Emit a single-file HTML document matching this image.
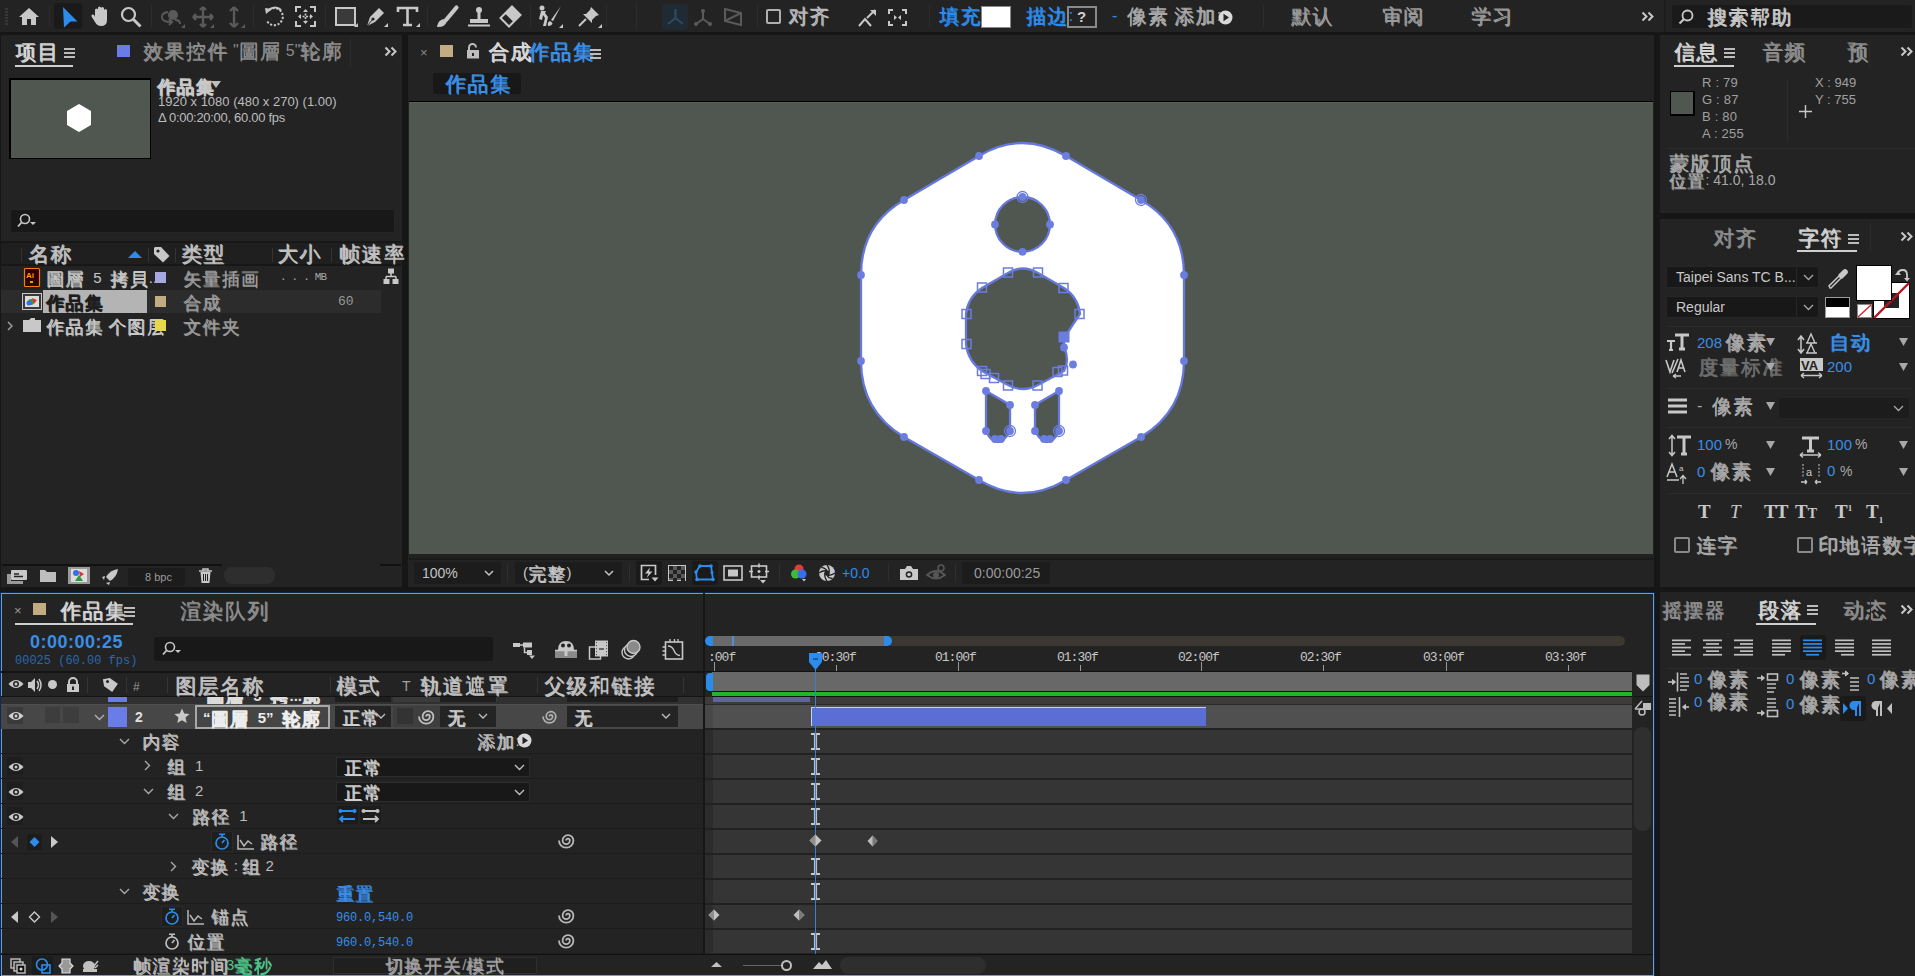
<!DOCTYPE html>
<html><head><meta charset="utf-8">
<style>
*{box-sizing:border-box;margin:0;padding:0}
html,body{width:1915px;height:976px;overflow:hidden;background:#161616;font-family:"Liberation Sans",sans-serif;color:#a9a9a9;font-size:14px}
.a{position:absolute}
.p{position:absolute;background:#232323}
.t{position:absolute;white-space:nowrap;line-height:1}
.c{letter-spacing:0;word-spacing:.3em}
.k{font-size:1.22em;line-height:0;letter-spacing:.07em;position:relative;top:.12em;text-shadow:.5px .5px 0 currentColor}
.b{color:#2d8ceb}
.m{font-family:"Liberation Mono",monospace}
svg{position:absolute;overflow:visible}
</style></head><body>
<!-- toolbar -->
<div class="p" id="toolbar" style="left:0;top:0;width:1915px;height:32px"></div>
<!-- project panel -->
<div class="p" id="proj" style="left:1px;top:35px;width:401px;height:552px"></div>
<!-- comp panel -->
<div class="p" id="comp" style="left:408px;top:35px;width:1246px;height:552px"></div>
<div class="a" style="left:409px;top:101px;width:1244px;height:1px;background:#000"></div><div class="a" style="left:409px;top:102px;width:1244px;height:452px;background:#4f5750;border-top:1px solid #5a5f5a"></div>

<!-- TOOLBAR -->
<svg style="left:5px;top:8px" width="3" height="18"><path d="M0,1H3M0,4H3M0,7H3M0,10H3M0,13H3M0,16H3" stroke="#4a4a4a" stroke-width="1"/></svg>
<svg style="left:18px;top:7px" width="22" height="19"><path d="M11,1 L21,10 H18 V18 H13 V12 H9 V18 H4 V10 H1 Z" fill="#c8c8c8"/></svg>
<div class="a" style="left:49px;top:5px;width:1px;height:22px;background:#2c2c2c"></div>
<div class="a" style="left:54px;top:3px;width:28px;height:26px;background:#1a1a1a;border-radius:2px"></div>
<svg style="left:62px;top:6px" width="17" height="22"><path d="M1,1 L15.5,15.5 L8.5,15.5 L2,21.5 Z" fill="#2d8ceb"/></svg>
<svg style="left:90px;top:6px" width="21" height="21"><path d="M5,11 V4 Q5,2.5 6.5,2.5 Q8,2.5 8,4 V10 V2 Q8,0.5 9.5,0.5 Q11,0.5 11,2 V10 V2.5 Q11,1 12.5,1 Q14,1 14,2.5 V10 V4.5 Q14,3 15.5,3 Q17,3 17,4.5 V14 Q17,20 11,20 Q7,20 5,16 L1.5,10.5 Q1,9 2.5,8.5 Q3.5,8.2 4.5,9.5 Z" fill="#c8c8c8"/></svg>
<svg style="left:120px;top:6px" width="22" height="22"><circle cx="8.5" cy="8.5" r="6.5" fill="none" stroke="#c8c8c8" stroke-width="2.2"/><path d="M13.5,13.5 L20.5,20.5" stroke="#c8c8c8" stroke-width="3"/></svg>
<div class="a" style="left:151px;top:5px;width:1px;height:22px;background:#2c2c2c"></div>
<svg style="left:160px;top:7px" width="24" height="20"><circle cx="13" cy="8" r="5" fill="#5a5a5a"/><path d="M8,5 Q1,6 2,11 Q3,15 11,15 M9,12 L12,15 L9,18" fill="none" stroke="#5a5a5a" stroke-width="2"/><path d="M15,13 Q20,13 20,17" fill="none" stroke="#5a5a5a" stroke-width="2"/></svg><svg style="left:181px;top:24px" width="4" height="4"><path d="M4,0V4H0Z" fill="#5a5a5a"/></svg>
<svg style="left:192px;top:6px" width="22" height="22"><path d="M11,1V21M1,11H21M11,1L8,4M11,1L14,4M11,21L8,18M11,21L14,18M1,11L4,8M1,11L4,14M21,11L18,8M21,11L18,14" stroke="#5a5a5a" stroke-width="2.4" fill="none"/></svg><svg style="left:210px;top:24px" width="4" height="4"><path d="M4,0V4H0Z" fill="#5a5a5a"/></svg>
<svg style="left:227px;top:6px" width="14" height="22"><path d="M7,1V21M7,1L3,5M7,1L11,5M7,21L3,17M7,21L11,17" stroke="#5a5a5a" stroke-width="2.4" fill="none"/></svg><svg style="left:241px;top:24px" width="4" height="4"><path d="M4,0V4H0Z" fill="#5a5a5a"/></svg>
<div class="a" style="left:253px;top:5px;width:1px;height:22px;background:#2c2c2c"></div>
<svg style="left:263px;top:6px" width="22" height="22"><path d="M6,4 A8.5,8.5 0 1 1 4,15" fill="none" stroke="#c8c8c8" stroke-width="2" stroke-dasharray="2.2,1.6"/><path d="M2,2 L9,3 L3,8Z" fill="#c8c8c8"/><path d="M6,4 A8.5,8.5 0 0 1 18,4" fill="none" stroke="#c8c8c8" stroke-width="2.2"/></svg>
<svg style="left:295px;top:6px" width="21" height="21"><path d="M1,6V1H6M15,1H20V6M20,15V20H15M6,20H1V15" fill="none" stroke="#c8c8c8" stroke-width="2"/><path d="M4,10.5H17M10.5,4V17" stroke="#c8c8c8" stroke-width="1.6" stroke-dasharray="2,1.5"/><path d="M3,10.5L6,8V13Z M18,10.5L15,8V13Z M10.5,3L8,6H13Z M10.5,18L8,15H13Z" fill="#c8c8c8"/></svg>
<div class="a" style="left:325px;top:5px;width:1px;height:22px;background:#2c2c2c"></div>
<svg style="left:335px;top:7px" width="21" height="19"><rect x="1" y="1" width="19" height="17" fill="#3a3a3a" stroke="#c8c8c8" stroke-width="2"/></svg><svg style="left:354px;top:23px" width="4" height="4"><path d="M4,0V4H0Z" fill="#c8c8c8"/></svg>
<svg style="left:365px;top:6px" width="21" height="21"><path d="M2,20 L5,11 L14,2 L19,7 L10,16 Z" fill="#c8c8c8"/><circle cx="8" cy="13" r="1.6" fill="#232323"/><path d="M2,20 L8,13" stroke="#232323" stroke-width="1"/></svg><svg style="left:384px;top:23px" width="4" height="4"><path d="M4,0V4H0Z" fill="#c8c8c8"/></svg>
<svg style="left:397px;top:7px" width="21" height="19"><path d="M1,5V1H20V5M10.5,1V18M6,18H15" fill="none" stroke="#c8c8c8" stroke-width="2.6"/></svg><svg style="left:416px;top:23px" width="4" height="4"><path d="M4,0V4H0Z" fill="#c8c8c8"/></svg>
<div class="a" style="left:427px;top:5px;width:1px;height:22px;background:#2c2c2c"></div>
<svg style="left:436px;top:6px" width="22" height="22"><path d="M20.5,1.5 L10,14" stroke="#c8c8c8" stroke-width="4.2" stroke-linecap="round"/><path d="M7.5,13 Q2,14 1,21 Q9,21.5 10.5,16 Z" fill="#c8c8c8"/></svg>
<svg style="left:467px;top:6px" width="24" height="21"><circle cx="12" cy="4" r="3" fill="#c8c8c8"/><rect x="10.5" y="5" width="3" height="8" fill="#c8c8c8"/><path d="M3,13H21V17H3Z" fill="#c8c8c8"/><rect x="1" y="18.5" width="22" height="2" fill="#c8c8c8"/></svg>
<svg style="left:498px;top:5px" width="24" height="23"><path d="M14,1.5 L22.5,10 L11,21.5 L2.5,13 Z" fill="none" stroke="#c8c8c8" stroke-width="2"/><path d="M14,1.5 L22.5,10 L15.5,17 L7,8.5 Z" fill="#c8c8c8"/></svg>
<div class="a" style="left:530px;top:5px;width:1px;height:22px;background:#2c2c2c"></div>
<svg style="left:537px;top:5px" width="26" height="23"><circle cx="5" cy="3" r="2.5" fill="#c8c8c8"/><path d="M4,6 L2,14 L5,15 L6,10 L8,13 L6,21 L9,21 L11,12 L8,8 L9,6Z" fill="#c8c8c8"/><path d="M24,1 L14,15 L16,16 Z" fill="#c8c8c8"/><path d="M13,16 Q10,17 11,21 Q15,21 15.5,18Z" fill="#c8c8c8"/></svg><svg style="left:559px;top:24px" width="4" height="4"><path d="M4,0V4H0Z" fill="#c8c8c8"/></svg>
<svg style="left:578px;top:6px" width="22" height="21"><path d="M13,1 L21,9 L18,10 L14,14 L14,17 L5,8 L8,8 L12,4 Z" fill="#c8c8c8"/><path d="M8,13 L1,20" stroke="#c8c8c8" stroke-width="2"/></svg><svg style="left:598px;top:24px" width="4" height="4"><path d="M4,0V4H0Z" fill="#c8c8c8"/></svg>
<div class="a" style="left:606px;top:5px;width:1px;height:22px;background:#2c2c2c"></div>
<div class="a" style="left:636px;top:3px;width:1px;height:26px;background:#2c2c2c"></div>
<div class="a" style="left:662px;top:4px;width:26px;height:26px;background:#1f2a33;border-radius:2px"></div>
<svg style="left:666px;top:7px" width="19" height="19"><path d="M9.5,2V11L2,17M9.5,11L17,17" stroke="#2a4a66" stroke-width="2.2" fill="none"/></svg>
<svg style="left:693px;top:7px" width="20" height="20"><path d="M10,3V12L3,17M10,12L17,17" stroke="#5a5a5a" stroke-width="2" fill="none"/><circle cx="10" cy="4" r="2" fill="#5a5a5a"/><circle cx="3" cy="17" r="2" fill="#5a5a5a"/><circle cx="17" cy="17" r="2" fill="#5a5a5a"/></svg>
<svg style="left:723px;top:7px" width="20" height="20"><path d="M2,2L18,6V18L2,14Z" fill="none" stroke="#5a5a5a" stroke-width="2"/><path d="M2,14L18,6" stroke="#5a5a5a" stroke-width="2"/></svg>
<div class="a" style="left:757px;top:5px;width:1px;height:22px;background:#2c2c2c"></div>
<div class="a" style="left:766px;top:9px;width:15px;height:15px;border:2px solid #b0b0b0;border-radius:2px"></div>
<div class="t c" style="left:788px;top:8px;font-size:16px;color:#b8b8b8;"><span class="k">对齐</span></div>
<svg style="left:858px;top:9px" width="19" height="18"><path d="M1,17 L7,10 L13,17" fill="none" stroke="#c8c8c8" stroke-width="2"/><path d="M9,9 L17,1" stroke="#c8c8c8" stroke-width="2"/><path d="M12,1H18V7Z" fill="#c8c8c8"/></svg>
<svg style="left:888px;top:9px" width="19" height="17"><path d="M1,5V1H5M14,1H18V5M18,12V16H14M5,16H1V12" fill="none" stroke="#c8c8c8" stroke-width="2"/><path d="M6,6L9,8.5L6,11Z M13,6L10,8.5L13,11Z" fill="#c8c8c8"/></svg>
<div class="a" style="left:929px;top:5px;width:1px;height:22px;background:#2c2c2c"></div>
<div class="t c" style="left:939px;top:8px;font-size:16px;color:#2d8ceb;letter-spacing:0"><span class="k">填充</span>:</div>
<div class="a" style="left:981px;top:6px;width:30px;height:22px;background:#fff;border:1px solid #888"></div>
<div class="t c" style="left:1026px;top:8px;font-size:16px;color:#2d8ceb;letter-spacing:0"><span class="k">描边</span>:</div>
<div class="a" style="left:1067px;top:6px;width:30px;height:22px;border:2px solid #8a8a8a"></div>
<div class="t " style="left:1077px;top:9px;font-size:15px;color:#d0d0d0;font-weight:bold">?</div>
<div class="t c" style="left:1112px;top:8px;font-size:16px;color:#a8a8a8;letter-spacing:0"><span style="color:#2d8ceb">-</span> <span class="k">像素</span></div>
<div class="t c" style="left:1174px;top:8px;font-size:16px;color:#a8a8a8;letter-spacing:0"><span class="k">添加</span>:</div>
<svg style="left:1218px;top:10px" width="15" height="15"><circle cx="7.5" cy="7.5" r="7" fill="#d8d8d8"/><path d="M5.5,3.8L11,7.5L5.5,11.2Z" fill="#232323"/></svg>
<div class="a" style="left:1263px;top:4px;width:1px;height:24px;background:#2c2c2c"></div>
<div class="t c" style="left:1291px;top:8px;font-size:16px;color:#9a9a9a;"><span class="k">默认</span></div>
<div class="t c" style="left:1382px;top:8px;font-size:16px;color:#9a9a9a;"><span class="k">审阅</span></div>
<div class="t c" style="left:1471px;top:8px;font-size:16px;color:#9a9a9a;"><span class="k">学习</span></div>
<svg style="left:1641px;top:11px" width="13" height="11"><path d="M1.5,1.5L5.5,5.5L1.5,9.5M7.5,1.5L11.5,5.5L7.5,9.5" fill="none" stroke="#c8c8c8" stroke-width="2"/></svg>
<div class="a" style="left:1664px;top:0px;width:2px;height:32px;background:#1c1c1c"></div>
<div class="a" style="left:1672px;top:5px;width:240px;height:23px;background:#1a1a1a;border-radius:3px"></div>
<svg style="left:1678px;top:9px" width="16" height="16"><circle cx="9.5" cy="6.5" r="5" fill="none" stroke="#c8c8c8" stroke-width="1.8"/><path d="M6,10 L1.5,14.5" stroke="#c8c8c8" stroke-width="2.2"/></svg>
<div class="t c" style="left:1707px;top:9px;font-size:16px;color:#c8c8c8;"><span class="k">搜索帮助</span></div>
<!-- PROJECT -->
<div class="t c" style="left:15px;top:43px;font-size:17px;color:#d4d4d4;"><span class="k">项目</span></div>
<svg style="left:64px;top:48px" width="11" height="10"><path d="M0,1H11M0,5H11M0,9H11" stroke="#bcbcbc" stroke-width="2"/></svg>
<div class="a" style="left:15px;top:65px;width:58px;height:2px;background:#cfcfcf"></div>
<div class="a" style="left:117px;top:45px;width:13px;height:12px;background:#6a7ce8"></div>
<div class="t c" style="left:143px;top:43px;font-size:16px;color:#8c8c8c;letter-spacing:0;word-spacing:0"><span class="k">效果控件</span> "<span class="k">圖層</span> 5"<span class="k">轮廓</span></div>
<div class="a" style="left:350px;top:38px;width:1px;height:30px;background:#2a2a2a"></div>
<svg style="left:384px;top:46px" width="13" height="11"><path d="M1.5,1.5L5.5,5.5L1.5,9.5M7.5,1.5L11.5,5.5L7.5,9.5" fill="none" stroke="#c8c8c8" stroke-width="2"/></svg>
<div class="a" style="left:9px;top:78px;width:142px;height:81px;background:#000"></div><div class="a" style="left:11px;top:80px;width:139px;height:78px;background:#4f5750"></div>
<svg style="left:66px;top:104px" width="26" height="28"><path d="M13,1 L24,7.5 V20.5 L13,27 L2,20.5 V7.5Z" fill="#fff" stroke="#fff" stroke-width="2" stroke-linejoin="round"/></svg>
<div class="t c" style="left:157px;top:78px;font-size:15px;color:#c8c8c8;font-weight:bold"><span class="k">作品集</span></div>
<svg style="left:211px;top:81px" width="10" height="7"><path d="M0,0H10L5,7Z" fill="#bdbdbd"/></svg>
<div class="t " style="left:158px;top:95px;font-size:13px;color:#bdbdbd;letter-spacing:0">1920 x 1080  (480 x 270) (1.00)</div>
<div class="t " style="left:158px;top:111px;font-size:13px;color:#bdbdbd;letter-spacing:-0.3px">&#916; 0:00:20:00, 60.00 fps</div>
<div class="a" style="left:10px;top:209px;width:385px;height:24px;background:#181818;border-radius:2px;border:1px solid #262626"></div>
<svg style="left:17px;top:213px" width="22" height="16"><circle cx="8" cy="6" r="4.5" fill="none" stroke="#c8c8c8" stroke-width="1.6"/><path d="M4.5,9.5 L1,13.5" stroke="#c8c8c8" stroke-width="1.8"/><path d="M13,9 L19,9 L16,12Z" fill="#c8c8c8"/></svg>
<div class="a" style="left:1px;top:241px;width:400px;height:2px;background:#171717"></div>
<div class="a" style="left:1px;top:243px;width:400px;height:22px;background:#1f1f1f"></div>
<div class="a" style="left:1px;top:264px;width:400px;height:2px;background:#171717"></div>
<div class="a" style="left:21px;top:248px;width:1px;height:14px;background:#333"></div>
<div class="a" style="left:148px;top:248px;width:1px;height:14px;background:#333"></div>
<div class="a" style="left:175px;top:248px;width:1px;height:14px;background:#333"></div>
<div class="a" style="left:272px;top:248px;width:1px;height:14px;background:#333"></div>
<div class="a" style="left:331px;top:248px;width:1px;height:14px;background:#333"></div>
<div class="a" style="left:393px;top:248px;width:1px;height:14px;background:#333"></div>
<div class="t c" style="left:28px;top:245px;font-size:17px;color:#c0c0c0;"><span class="k">名称</span></div>
<svg style="left:128px;top:251px" width="14" height="7"><path d="M0,7L7,0L14,7Z" fill="#2d8ceb"/></svg>
<svg style="left:153px;top:246px" width="18" height="17"><path d="M1,2V8L10,16.5L16.5,10L8,1H2Z" fill="#c8c8c8"/><circle cx="5" cy="5" r="1.6" fill="#1f1f1f"/></svg>
<div class="t c" style="left:181px;top:245px;font-size:17px;color:#c0c0c0;"><span class="k">类型</span></div>
<div class="t c" style="left:277px;top:245px;font-size:17px;color:#c0c0c0;"><span class="k">大小</span></div>
<div class="t c" style="left:339px;top:245px;font-size:17px;color:#c0c0c0;"><span class="k">帧速率</span></div>
<div class="a" style="left:1px;top:290px;width:380px;height:23px;background:#2c2c2c"></div>
<div class="a" style="left:43px;top:290px;width:104px;height:23px;background:#b4b4b4"></div>
<svg style="left:24px;top:268px" width="16" height="19"><rect x="0.5" y="0.5" width="15" height="18" rx="1" fill="#330000" stroke="#e8801f" stroke-width="1.2"/><text x="2" y="10" font-size="8" font-weight="bold" fill="#ff9a00" font-family="Liberation Sans">Ai</text><rect x="6" y="13" width="3" height="2" fill="#ff9a00"/></svg>
<div class="t c" style="left:46px;top:270px;font-size:15px;color:#c8c8c8;letter-spacing:0"><span class="k">圖層</span> 5 <span class="k">拷貝</span>...</div>
<div class="a" style="left:155px;top:272px;width:11px;height:11px;background:#a8a8e0"></div>
<div class="t c" style="left:183px;top:270px;font-size:15px;color:#9a9a9a;"><span class="k">矢量插画</span></div>
<div class="t m" style="left:280px;top:272px;font-size:11px;color:#a8a8a8;letter-spacing:-0.8px">. . .  MB</div>
<svg style="left:383px;top:268px" width="16" height="17"><rect x="5" y="0.5" width="6" height="5" fill="#c8c8c8"/><path d="M8,5V8.5M3,8.5H13M3,8.5V11M13,8.5V11" stroke="#c8c8c8" stroke-width="1.5" fill="none"/><rect x="0.5" y="11" width="6" height="5" fill="#c8c8c8"/><rect x="9.5" y="11" width="6" height="5" fill="#c8c8c8"/></svg>
<svg style="left:22px;top:293px" width="20" height="17"><rect x="0.5" y="0.5" width="19" height="16" fill="#3a3a3a" stroke="#c8c8c8"/><rect x="3" y="3" width="14" height="11" fill="#ddd"/><circle cx="9" cy="9" r="3" fill="#2a9a3a"/><path d="M10,5L15,7L12,11Z" fill="#d33"/><circle cx="7" cy="10" r="2.5" fill="#3a6de8"/></svg>
<div class="t c" style="left:46px;top:294px;font-size:15px;color:#1e1e1e;font-weight:bold"><span class="k">作品集</span></div>
<div class="a" style="left:155px;top:296px;width:11px;height:11px;background:#c3ab82"></div>
<div class="t c" style="left:183px;top:294px;font-size:15px;color:#9a9a9a;"><span class="k">合成</span></div>
<div class="t m" style="left:338px;top:295px;font-size:13px;color:#9a9a9a;">60</div>
<svg style="left:7px;top:321px" width="6" height="10"><path d="M1,1L5,5L1,9" fill="none" stroke="#a8a8a8" stroke-width="1.3"/></svg>
<svg style="left:22px;top:317px" width="20" height="16"><path d="M1,3H7L9,1H13V3H19V15H1Z" fill="#c8c8c8"/></svg>
<div class="t c" style="left:46px;top:318px;font-size:15px;color:#c8c8c8;letter-spacing:0;word-spacing:0"><span class="k">作品集</span> <span class="k">个图层</span></div>
<div class="a" style="left:155px;top:320px;width:11px;height:11px;background:#e6d84a"></div>
<div class="t c" style="left:183px;top:318px;font-size:15px;color:#9a9a9a;"><span class="k">文件夹</span></div>
<svg style="left:6px;top:569px" width="22" height="16"><rect x="5" y="1" width="16" height="10" rx="1" fill="#c8c8c8"/><path d="M8,5H13M8,7.5H17" stroke="#232323" stroke-width="1.3"/><rect x="1" y="5" width="4" height="10" fill="#9a9a9a"/><rect x="1" y="12" width="16" height="3" fill="#9a9a9a"/></svg>
<svg style="left:39px;top:569px" width="18" height="14"><path d="M1,1H6L8,3H17V13H1Z" fill="#bdbdbd"/></svg>
<svg style="left:68px;top:567px" width="22" height="17"><rect x="0" y="0" width="22" height="17" fill="#9a9a9a"/><rect x="3" y="2" width="16" height="13" fill="#ddd"/><circle cx="8" cy="6" r="3" fill="#3a6de8"/><path d="M11,4L16,7L12,10Z" fill="#d33"/><path d="M7,14L11,8L15,14Z" fill="#2a9a3a"/></svg>
<svg style="left:101px;top:568px" width="18" height="17"><path d="M17,1 Q9,2 5,9 L9,13 Q16,9 17,1Z" fill="#c8c8c8"/><path d="M4,8 L1,9 L3,12Z M9,14 L8,17 L5,15Z" fill="#c8c8c8"/></svg>
<div class="a" style="left:128px;top:568px;width:57px;height:18px;background:#1c1c1c;border-radius:2px"></div>
<div class="t " style="left:145px;top:572px;font-size:11px;color:#9a9a9a;">8 bpc</div>
<svg style="left:198px;top:568px" width="15" height="16"><path d="M1,3H14M5,3V1H10V3" stroke="#c8c8c8" stroke-width="1.5" fill="none"/><path d="M2.5,4H12.5L11.5,15H3.5Z" fill="#c8c8c8"/><path d="M5.5,6V13M7.5,6V13M9.5,6V13" stroke="#232323" stroke-width="1"/></svg>
<div class="a" style="left:224px;top:567px;width:51px;height:17px;background:#2e2e2e;border-radius:8px"></div>
<div class="a" style="left:2px;top:564px;width:220px;height:2px;background:#111"></div><div class="a" style="left:380px;top:564px;width:21px;height:2px;background:#111"></div>
<!-- comp header -->
<div class="t" style="left:420px;top:46px;font-size:13px;color:#8a8a8a">&#215;</div>
<div class="a" style="left:440px;top:45px;width:13px;height:12px;background:#c3ab82"></div>
<svg style="left:466px;top:43px" width="14" height="16" viewBox="0 0 14 16"><path d="M3,7 V4.5 A3.5,3.5 0 0 1 10,4.5" fill="none" stroke="#bdbdbd" stroke-width="2"/><rect x="1" y="7" width="12" height="8.5" fill="#bdbdbd"/><rect x="6" y="10" width="2" height="3" fill="#232323"/></svg>
<div class="t c" style="left:488px;top:43px;font-size:17px;color:#d9d9d9"><span class="k">合成</span></div>
<div class="t c" style="left:528px;top:43px;font-size:17px;color:#3b8fe4"><span class="k">作品集</span></div>
<svg style="left:590px;top:49px" width="11" height="10"><path d="M0,1H11M0,5H11M0,9H11" stroke="#bcbcbc" stroke-width="2"/></svg>
<div class="a" style="left:433px;top:73px;width:88px;height:21px;background:#181818;border-radius:2px"></div>
<div class="t c" style="left:445px;top:75px;font-size:17px;color:#3b8fe4"><span class="k">作品集</span></div>
<!-- comp bottom bar -->
<div class="a" style="left:409px;top:554px;width:1244px;height:4px;background:#20221f"></div><div class="a" style="left:409px;top:558px;width:1244px;height:2px;background:#1a1a1b"></div>
<div class="a" style="left:414px;top:562px;width:87px;height:22px;background:#1c1c1c;border-radius:2px"></div>
<div class="t" style="left:422px;top:566px;font-size:14px;color:#c4c4c4">100%</div>
<svg style="left:484px;top:570px" width="10" height="6"><path d="M1,1 L5,5 L9,1" fill="none" stroke="#c4c4c4" stroke-width="1.5"/></svg>
<div class="a" style="left:507px;top:564px;width:1px;height:18px;background:#2e2e2e"></div>
<div class="a" style="left:515px;top:562px;width:107px;height:22px;background:#1c1c1c;border-radius:2px"></div>
<div class="t c" style="left:523px;top:565px;font-size:15px;color:#c4c4c4">(<span class="k">完整</span>)</div>
<svg style="left:604px;top:570px" width="10" height="6"><path d="M1,1 L5,5 L9,1" fill="none" stroke="#c4c4c4" stroke-width="1.5"/></svg>
<div class="a" style="left:629px;top:564px;width:1px;height:18px;background:#2e2e2e"></div>
<div class="a" style="left:636px;top:561px;width:26px;height:24px;background:#1a1a1a;border-radius:2px"></div>
<svg style="left:640px;top:564px" width="20" height="20"><path d="M15.5,11 V1.5 H1.5 V15.5 H9" fill="none" stroke="#c8c8c8" stroke-width="1.7"/><path d="M10,3.5 L5,9.5 H8.5 L6.5,14 L12.5,7.5 H9 Z" fill="#c8c8c8"/><path d="M11.5,13.5 H18.5 L15,17.5Z" fill="#c8c8c8"/></svg>
<svg style="left:668px;top:565px" width="18" height="16"><rect x="0.5" y="0.5" width="17" height="15" fill="#5a5a5a" stroke="#c8c8c8"/><path d="M1,1h4v4h-4zM9,1h4v4h-4zM5,5h4v4h-4zM13,5h4v4h-4zM1,9h4v4h-4zM9,9h4v4h-4zM5,13h4v3h-4zM13,13h4v3h-4z" fill="#222"/></svg>
<div class="a" style="left:692px;top:561px;width:26px;height:24px;background:#1a1a1a;border-radius:2px"></div>
<svg style="left:694px;top:564px" width="22" height="19"><path d="M6,2 L17,2 L19,15.5 L3,15.5 L2,8 Z" fill="none" stroke="#2d8ceb" stroke-width="1.8"/><g fill="#2d8ceb"><circle cx="6" cy="2" r="1.8"/><circle cx="17" cy="2" r="1.8"/><circle cx="19" cy="15.5" r="1.8"/><circle cx="3" cy="15.5" r="1.8"/><circle cx="2" cy="8" r="1.8"/><circle cx="18" cy="8.5" r="1.5"/></g></svg>
<svg style="left:723px;top:565px" width="20" height="16"><rect x="1" y="1" width="18" height="14" fill="none" stroke="#c8c8c8" stroke-width="1.6"/><rect x="5" y="4.5" width="10" height="7" fill="#c8c8c8"/></svg>
<svg style="left:749px;top:563px" width="20" height="21"><rect x="2.5" y="3" width="15" height="11" fill="none" stroke="#c8c8c8" stroke-width="1.6"/><path d="M0,8.5H4M16,8.5H20M10,0.5V4.5M10,12.5V16.5M8.5,8.5H11.5M10,7V10" stroke="#c8c8c8" stroke-width="1.6"/><path d="M11,17 L17,17 L14,20.5Z" fill="#c8c8c8"/></svg>
<div class="a" style="left:779px;top:564px;width:1px;height:18px;background:#2e2e2e"></div>
<svg style="left:790px;top:564px" width="20" height="18"><circle cx="9" cy="5" r="4.5" fill="#e23b3b"/><circle cx="5.5" cy="10" r="4.5" fill="#3dbb3d"/><circle cx="12" cy="10" r="4.5" fill="#3a6de8"/><path d="M12,15 L16,15 L14,17.5Z" fill="#c8c8c8"/></svg>
<svg style="left:818px;top:564px" width="18" height="18"><circle cx="9" cy="9" r="8" fill="#c8c8c8"/><g stroke="#232323" stroke-width="1.3" fill="none"><path d="M9,1 Q12,5 11,9"/><path d="M17,9 Q13,12 9,11"/><path d="M9,17 Q6,13 7,9"/><path d="M1,9 Q5,6 9,7"/><path d="M3.3,3.3 Q8,4 9,7"/><path d="M14.7,14.7 Q10,14 9,11"/></g><circle cx="9" cy="9" r="2.6" fill="#232323"/></svg>
<div class="t" style="left:842px;top:566px;font-size:14px;color:#2d8ceb">+0.0</div>
<div class="a" style="left:888px;top:564px;width:1px;height:18px;background:#2e2e2e"></div>
<svg style="left:899px;top:565px" width="20" height="16"><path d="M1,4 H6 L8,1 H12 L14,4 H19 V15 H1 Z" fill="#c8c8c8"/><circle cx="10" cy="9.5" r="3.3" fill="#232323"/><circle cx="10" cy="9.5" r="1.8" fill="#c8c8c8"/></svg>
<svg style="left:926px;top:564px" width="20" height="18" opacity=".3"><path d="M1,11 Q10,3 19,11 Q10,18 1,11Z" fill="none" stroke="#c8c8c8" stroke-width="1.8"/><circle cx="10" cy="11" r="3" fill="#c8c8c8"/><circle cx="15" cy="4" r="3" fill="none" stroke="#c8c8c8" stroke-width="1.6"/></svg>
<div class="a" style="left:955px;top:564px;width:1px;height:18px;background:#2e2e2e"></div>
<div class="a" style="left:962px;top:562px;width:88px;height:22px;background:#1c1c1c;border-radius:2px"></div>
<div class="t" style="left:974px;top:566px;font-size:14px;color:#9a9a9a">0:00:00:25</div>
<!-- info -->
<div class="p" id="info" style="left:1660px;top:35px;width:255px;height:178px"></div>
<!-- character -->
<div class="p" id="char" style="left:1660px;top:219px;width:255px;height:368px"></div>
<!-- timeline -->
<div class="p" id="tl" style="left:1px;top:593px;width:1653px;height:383px;border:1px solid #6a9ed8;box-shadow:0 0 0 1px #0b2a52"></div>

<!-- TIMELINE -->
<div class="t" style="left:14px;top:604px;font-size:13px;color:#9a9a9a">&#215;</div>
<div class="a" style="left:33px;top:603px;width:13px;height:12px;background:#c3ab82"></div>
<div class="t c" style="left:60px;top:602px;font-size:17px;color:#d4d4d4"><span class="k">作品集</span></div>
<svg style="left:124px;top:607px" width="11" height="10"><path d="M0,1H11M0,5H11M0,9H11" stroke="#bcbcbc" stroke-width="2"/></svg>
<div class="a" style="left:15px;top:623px;width:118px;height:2px;background:#cfcfcf"></div>
<div class="t c" style="left:180px;top:602px;font-size:17px;color:#8c8c8c"><span class="k">渲染队列</span></div>
<div class="t" style="left:30px;top:633px;font-size:18px;font-weight:bold;color:#3a8ee6;letter-spacing:0.5px">0:00:00:25</div>
<div class="t" style="left:15px;top:655px;font-size:12px;font-family:'Liberation Mono',monospace;color:#2a67ad">00025 (60.00 fps)</div>
<div class="a" style="left:154px;top:637px;width:339px;height:24px;background:#181818;border-radius:3px"></div>
<svg style="left:162px;top:641px" width="22" height="16"><circle cx="8" cy="6" r="4.5" fill="none" stroke="#c8c8c8" stroke-width="1.6"/><path d="M4.5,9.5 L1,13.5" stroke="#c8c8c8" stroke-width="1.8"/><path d="M13,9 L19,9 L16,12Z" fill="#c8c8c8"/></svg>
<!-- timeline toolbar icons -->
<svg style="left:512px;top:640px" width="24" height="20"><rect x="1" y="3" width="7" height="4" fill="#c8c8c8"/><path d="M8,5H11" stroke="#c8c8c8" stroke-width="1.5"/><rect x="11" y="2.5" width="9" height="5" fill="#c8c8c8"/><path d="M12.5,7.5V12.5H15" fill="none" stroke="#c8c8c8" stroke-width="1.5"/><rect x="15" y="10" width="5" height="5" fill="#c8c8c8"/><path d="M17,15.5H23L20,19Z" fill="#c8c8c8"/></svg>
<svg style="left:554px;top:639px" width="24" height="20"><path d="M4,11 Q4,2 12,2 Q20,2 20,11Z" fill="#c8c8c8"/><circle cx="9" cy="6.5" r="2" fill="#232323"/><circle cx="15" cy="6.5" r="2" fill="#232323"/><rect x="1" y="12" width="22" height="7" fill="#8a8a8a"/><path d="M1,11.5H23" stroke="#c8c8c8" stroke-width="1.5"/><rect x="10.5" y="9" width="3" height="8" fill="#c8c8c8"/></svg>
<svg style="left:587px;top:639px" width="22" height="22"><rect x="2.5" y="8" width="11" height="12" fill="none" stroke="#c8c8c8" stroke-width="1.5"/><rect x="8" y="1.5" width="13" height="16" fill="#c8c8c8"/><path d="M9.5,3V16.5M19.5,3V16.5" stroke="#555" stroke-width="1" stroke-dasharray="1.2,1.8"/><path d="M12,10H17" stroke="#333" stroke-width="1.3"/></svg>
<svg style="left:620px;top:639px" width="22" height="22"><circle cx="8.5" cy="13.5" r="6.5" fill="#232323" stroke="#c8c8c8" stroke-width="1.4"/><circle cx="11" cy="11" r="6.5" fill="#232323" stroke="#c8c8c8" stroke-width="1.4"/><circle cx="13.5" cy="8" r="6.5" fill="#8a8a8a" stroke="#c8c8c8" stroke-width="1.4"/></svg>
<svg style="left:662px;top:638px" width="24" height="24"><rect x="3.5" y="4" width="17" height="17" fill="none" stroke="#c8c8c8" stroke-width="1.6"/><path d="M8,1V4M12.5,1V4M16,1V4M0.5,9H3.5M0.5,13H3.5M0.5,17H3.5" stroke="#c8c8c8" stroke-width="1.3"/><path d="M6,8 Q10,8 12,12.5 Q14,17.5 18,17.5" fill="none" stroke="#c8c8c8" stroke-width="1.4"/></svg>
<!-- column header -->
<div class="a" style="left:1px;top:671px;width:703px;height:2px;background:#141414"></div>
<div class="a" style="left:1px;top:696px;width:703px;height:1px;background:#141414"></div>
<svg style="left:8px;top:677px" width="16" height="14"><path d="M0.5,7 Q8,-1 15.5,7 Q8,15 0.5,7Z" fill="#c8c8c8"/><circle cx="8" cy="7" r="3" fill="#232323"/><circle cx="8" cy="7" r="1.5" fill="#c8c8c8"/></svg>
<svg style="left:27px;top:677px" width="16" height="16"><path d="M1,5H4L8,1V15L4,11H1Z" fill="#c8c8c8"/><path d="M10,4Q13,8 10,12M12,2Q16,8 12,14" fill="none" stroke="#c8c8c8" stroke-width="1.5"/></svg>
<div class="a" style="left:48px;top:680px;width:9px;height:9px;border-radius:50%;background:#c8c8c8"></div>
<svg style="left:66px;top:677px" width="14" height="16"><path d="M3,7V5A4,4 0 0 1 11,5V7" fill="none" stroke="#c8c8c8" stroke-width="2"/><rect x="1" y="7" width="12" height="8" fill="#c8c8c8"/><rect x="6" y="9.5" width="2" height="3.5" fill="#232323"/></svg>
<div class="a" style="left:87px;top:677px;width:1px;height:16px;background:#353535"></div>
<svg style="left:103px;top:677px" width="16" height="16"><path d="M1,1H8L15,8L8,15L1,8Z" fill="#c8c8c8" transform="rotate(-10 8 8)"/><circle cx="4.5" cy="4.5" r="1.5" fill="#232323"/></svg>
<div class="a" style="left:126px;top:677px;width:1px;height:16px;background:#353535"></div>
<div class="t" style="left:133px;top:681px;font-size:12px;color:#9a9a9a">#</div>
<div class="a" style="left:167px;top:677px;width:1px;height:16px;background:#353535"></div>
<div class="t c" style="left:175px;top:677px;font-size:17px;color:#c0c0c0"><span class="k">图层名称</span></div>
<div class="a" style="left:330px;top:677px;width:1px;height:16px;background:#353535"></div>
<div class="t c" style="left:336px;top:677px;font-size:17px;color:#c0c0c0"><span class="k">模式</span></div>
<div class="t" style="left:402px;top:679px;font-size:14px;color:#a0a0a0">T</div>
<div class="t c" style="left:420px;top:677px;font-size:17px;color:#c0c0c0"><span class="k">轨道遮罩</span></div>
<div class="a" style="left:537px;top:677px;width:1px;height:16px;background:#353535"></div>
<div class="t c" style="left:544px;top:677px;font-size:17px;color:#c0c0c0"><span class="k">父级和链接</span></div>
<div class="a" style="left:683px;top:677px;width:1px;height:16px;background:#353535"></div>
<!-- partial layer 1 row -->
<div class="a" style="left:1px;top:697px;width:702px;height:7px;background:#303030;overflow:hidden">
  <div class="a" style="left:107px;top:-12px;width:19px;height:17px;background:#6a7ce8"></div>
  <div class="a" style="left:334px;top:-5px;width:56px;height:10px;background:#1e1e1e"></div><div class="a" style="left:392px;top:-5px;width:104px;height:10px;background:#3a3a3a"></div><div class="a" style="left:439px;top:-5px;width:56px;height:10px;background:#1e1e1e"></div><div class="a" style="left:566px;top:-5px;width:111px;height:10px;background:#1e1e1e"></div><div class="t c" style="left:205px;top:-9px;font-size:15px;font-weight:bold;color:#ddd"><span class="k">圖層</span> 5 <span class="k">拷</span>...<span class="k">廓</span></div>
</div>
<!-- layer 2 row -->
<div class="a" style="left:1px;top:704px;width:702px;height:25px;background:#474747;border-top:1px solid #4e4e4e"></div>
<div class="a" style="left:7px;top:707px;width:16px;height:17px;background:#3a3a3a"></div>
<svg style="left:8px;top:709px" width="16" height="14"><path d="M0.5,7 Q8,-1 15.5,7 Q8,15 0.5,7Z" fill="#d0d0d0"/><circle cx="8" cy="7" r="3" fill="#3a3a3a"/><circle cx="8" cy="7" r="1.5" fill="#d0d0d0"/></svg>
<div class="a" style="left:45px;top:707px;width:15px;height:16px;background:#3d3d3d"></div>
<div class="a" style="left:63px;top:707px;width:16px;height:16px;background:#3d3d3d"></div>
<svg style="left:94px;top:714px" width="11" height="7"><path d="M1,1L5.5,5.5L10,1" fill="none" stroke="#b0b0b0" stroke-width="1.4"/></svg>
<div class="a" style="left:108px;top:707px;width:19px;height:20px;background:#6a7ce8"></div>
<div class="t" style="left:135px;top:710px;font-size:14px;font-weight:bold;color:#e0e0e0">2</div>
<svg style="left:174px;top:708px" width="16" height="16"><path d="M8,0.5L10.2,5.6L15.6,6.1L11.5,9.6L12.7,15L8,12.2L3.3,15L4.5,9.6L0.4,6.1L5.8,5.6Z" fill="#c8c8c8"/></svg>
<div class="a" style="left:195px;top:705px;width:135px;height:24px;border:2px solid #a8a8a8;background:#454545"></div>
<div class="t c" style="left:203px;top:710px;font-size:15px;font-weight:bold;color:#ededed">“<span class="k">圖層</span> 5” <span class="k">轮廓</span></div>
<div class="a" style="left:335px;top:706px;width:56px;height:21px;background:#242424"></div>
<div class="t c" style="left:342px;top:709px;font-size:15px;color:#d0d0d0"><span class="k">正常</span></div>
<svg style="left:376px;top:713px" width="10" height="6"><path d="M1,1L5,5L9,1" fill="none" stroke="#c0c0c0" stroke-width="1.3"/></svg>
<div class="a" style="left:393px;top:706px;width:103px;height:21px;background:#3e3e3e"></div>
<div class="a" style="left:397px;top:708px;width:16px;height:16px;background:#333"></div>
<svg style="left:419px;top:707px" width="18" height="18"><path d="M9,9.5 m-1.8,0 a1.8,1.8 0 1 1 3.6,0 a3.6,3.6 0 1 1 -7.2,0 a5.4,5.4 0 1 1 10.8,0 a7.2,7.2 0 1 1 -14.4,0" fill="none" stroke="#c0c0c0" stroke-width="1.8"/></svg>
<div class="a" style="left:440px;top:706px;width:56px;height:21px;background:#242424"></div>
<div class="t c" style="left:447px;top:709px;font-size:15px;color:#d0d0d0"><span class="k">无</span></div>
<svg style="left:478px;top:713px" width="10" height="6"><path d="M1,1L5,5L9,1" fill="none" stroke="#c0c0c0" stroke-width="1.3"/></svg>
<svg style="left:543px;top:708px" width="16" height="16"><path d="M8,8.5 m-1.6,0 a1.6,1.6 0 1 1 3.2,0 a3.2,3.2 0 1 1 -6.4,0 a4.8,4.8 0 1 1 9.6,0 a6.4,6.4 0 1 1 -12.8,0" fill="none" stroke="#b0b0b0" stroke-width="1.7"/></svg>
<div class="a" style="left:567px;top:706px;width:111px;height:21px;background:#242424"></div>
<div class="t c" style="left:574px;top:709px;font-size:15px;color:#d0d0d0"><span class="k">无</span></div>
<svg style="left:661px;top:713px" width="10" height="6"><path d="M1,1L5,5L9,1" fill="none" stroke="#c0c0c0" stroke-width="1.3"/></svg>
<div class="a" style="left:1px;top:753px;width:703px;height:1px;background:#1c1c1c"></div>
<div class="a" style="left:1px;top:778px;width:703px;height:1px;background:#1c1c1c"></div>
<div class="a" style="left:7px;top:757px;width:16px;height:18px;background:#1e1e1e"></div><svg style="left:8px;top:760px" width="16" height="14"><path d="M0.5,7 Q8,-1 15.5,7 Q8,15 0.5,7Z" fill="#c8c8c8"/><circle cx="8" cy="7" r="3" fill="#1e1e1e"/><circle cx="8" cy="7" r="1.5" fill="#c8c8c8"/></svg>
<div class="a" style="left:1px;top:803px;width:703px;height:1px;background:#1c1c1c"></div>
<div class="a" style="left:7px;top:782px;width:16px;height:18px;background:#1e1e1e"></div><svg style="left:8px;top:785px" width="16" height="14"><path d="M0.5,7 Q8,-1 15.5,7 Q8,15 0.5,7Z" fill="#c8c8c8"/><circle cx="8" cy="7" r="3" fill="#1e1e1e"/><circle cx="8" cy="7" r="1.5" fill="#c8c8c8"/></svg>
<div class="a" style="left:1px;top:828px;width:703px;height:1px;background:#1c1c1c"></div>
<div class="a" style="left:7px;top:807px;width:16px;height:18px;background:#1e1e1e"></div><svg style="left:8px;top:810px" width="16" height="14"><path d="M0.5,7 Q8,-1 15.5,7 Q8,15 0.5,7Z" fill="#c8c8c8"/><circle cx="8" cy="7" r="3" fill="#1e1e1e"/><circle cx="8" cy="7" r="1.5" fill="#c8c8c8"/></svg>
<div class="a" style="left:1px;top:853px;width:703px;height:1px;background:#1c1c1c"></div>
<div class="a" style="left:1px;top:878px;width:703px;height:1px;background:#1c1c1c"></div>
<div class="a" style="left:1px;top:903px;width:703px;height:1px;background:#1c1c1c"></div>
<div class="a" style="left:1px;top:928px;width:703px;height:1px;background:#1c1c1c"></div>
<div class="a" style="left:1px;top:953px;width:703px;height:1px;background:#1c1c1c"></div>
<svg style="left:119px;top:738px" width="11" height="7"><path d="M1,1L5.5,5.5L10,1" fill="none" stroke="#a8a8a8" stroke-width="1.4"/></svg>
<div class="t c" style="left:142px;top:733px;font-size:15px;color:#bdbdbd"><span class="k">内容</span></div>
<div class="t c" style="left:477px;top:733px;font-size:15px;color:#bdbdbd"><span class="k">添加</span>:</div>
<svg style="left:517px;top:733px" width="15" height="15"><circle cx="7.5" cy="7.5" r="7" fill="#d8d8d8"/><path d="M5.5,3.8L11,7.5L5.5,11.2Z" fill="#232323"/></svg>
<svg style="left:144px;top:760px" width="7" height="11"><path d="M1,1L5.5,5.5L1,10" fill="none" stroke="#a8a8a8" stroke-width="1.4"/></svg>
<div class="t c" style="left:167px;top:758px;font-size:15px;color:#bdbdbd"><span class="k">组</span> 1</div>
<div class="a" style="left:336px;top:757px;width:194px;height:20px;background:#181818;border:1px solid #2c2c2c"></div><div class="t c" style="left:344px;top:759px;font-size:15px;color:#cfcfcf"><span class="k">正常</span></div><svg style="left:514px;top:764px" width="11" height="7"><path d="M1,1L5.5,5.5L10,1" fill="none" stroke="#c0c0c0" stroke-width="1.4"/></svg>
<svg style="left:143px;top:788px" width="11" height="7"><path d="M1,1L5.5,5.5L10,1" fill="none" stroke="#a8a8a8" stroke-width="1.4"/></svg>
<div class="t c" style="left:167px;top:783px;font-size:15px;color:#bdbdbd"><span class="k">组</span> 2</div>
<div class="a" style="left:336px;top:782px;width:194px;height:20px;background:#181818;border:1px solid #2c2c2c"></div><div class="t c" style="left:344px;top:784px;font-size:15px;color:#cfcfcf"><span class="k">正常</span></div><svg style="left:514px;top:789px" width="11" height="7"><path d="M1,1L5.5,5.5L10,1" fill="none" stroke="#c0c0c0" stroke-width="1.4"/></svg>
<svg style="left:168px;top:813px" width="11" height="7"><path d="M1,1L5.5,5.5L10,1" fill="none" stroke="#a8a8a8" stroke-width="1.4"/></svg>
<div class="t c" style="left:192px;top:808px;font-size:15px;color:#bdbdbd"><span class="k">路径</span> 1</div>
<div class="a" style="left:337px;top:806px;width:21px;height:18px;background:#1c1c1c"></div><svg style="left:338px;top:808px" width="19" height="14"><path d="M2,3H17M2,11H17M5,8L2,11L5,14" fill="none" stroke="#2d8ceb" stroke-width="1.8"/><circle cx="2.5" cy="3" r="2" fill="#2d8ceb"/><circle cx="16.5" cy="3" r="2" fill="#2d8ceb"/></svg>
<div class="a" style="left:360px;top:806px;width:21px;height:18px;background:#1c1c1c"></div><svg style="left:361px;top:808px" width="19" height="14"><path d="M2,3H17M2,11H17M14,8L17,11L14,14" fill="none" stroke="#c0c0c0" stroke-width="1.8"/><circle cx="2.5" cy="3" r="2" fill="#c0c0c0"/><circle cx="16.5" cy="3" r="2" fill="#c0c0c0"/></svg>
<svg style="left:10px;top:834px" width="52" height="16"><path d="M1,8L8,2V14Z" fill="#555"/><rect x="17" y="0" width="15" height="16" fill="#1c1c1c"/><path d="M24.5,3L29.5,8L24.5,13L19.5,8Z" fill="#2d8ceb"/><path d="M41,2L48,8L41,14Z" fill="#c8c8c8"/></svg>
<div class="a" style="left:211px;top:831px;width:22px;height:21px;background:#1e1e1e;border:1px solid #2a2a2a"></div><svg style="left:214px;top:833px" width="16" height="17"><circle cx="8" cy="10" r="6" fill="none" stroke="#2d8ceb" stroke-width="1.7"/><path d="M5,1.2H11M8,1V4M8,10L10.5,7" stroke="#2d8ceb" stroke-width="1.6" fill="none"/></svg>
<svg style="left:237px;top:835px" width="17" height="15"><path d="M1,0V14H17M3,5L7,11L11,6L15,9" fill="none" stroke="#b8b8b8" stroke-width="1.5"/></svg>
<div class="t c" style="left:260px;top:833px;font-size:15px;color:#bdbdbd"><span class="k">路径</span></div>
<svg style="left:559px;top:831px" width="18" height="18"><path d="M9,9.5 m-1.8,0 a1.8,1.8 0 1 1 3.6,0 a3.6,3.6 0 1 1 -7.2,0 a5.4,5.4 0 1 1 10.8,0 a7.2,7.2 0 1 1 -14.4,0" fill="none" stroke="#b8b8b8" stroke-width="1.8"/></svg>
<svg style="left:170px;top:861px" width="7" height="11"><path d="M1,1L5.5,5.5L1,10" fill="none" stroke="#a8a8a8" stroke-width="1.4"/></svg>
<div class="t c" style="left:191px;top:858px;font-size:15px;word-spacing:0;color:#bdbdbd"><span class="k">变换</span> : <span class="k">组</span> 2</div>
<svg style="left:119px;top:888px" width="11" height="7"><path d="M1,1L5.5,5.5L10,1" fill="none" stroke="#a8a8a8" stroke-width="1.4"/></svg>
<div class="t c" style="left:142px;top:883px;font-size:15px;color:#bdbdbd"><span class="k">变换</span></div>
<div class="t c" style="left:336px;top:885px;font-size:15px;color:#3a8ee6"><span class="k">重置</span></div>
<svg style="left:10px;top:909px" width="52" height="16"><path d="M1,8L8,2V14Z" fill="#c8c8c8"/><path d="M24.5,3L29.5,8L24.5,13L19.5,8Z" fill="none" stroke="#c8c8c8" stroke-width="1.4"/><path d="M41,2L48,8L41,14Z" fill="#555"/></svg>
<div class="a" style="left:161px;top:906px;width:22px;height:21px;background:#1e1e1e;border:1px solid #2a2a2a"></div><svg style="left:164px;top:908px" width="16" height="17"><circle cx="8" cy="10" r="6" fill="none" stroke="#2d8ceb" stroke-width="1.7"/><path d="M5,1.2H11M8,1V4M8,10L10.5,7" stroke="#2d8ceb" stroke-width="1.6" fill="none"/></svg>
<svg style="left:187px;top:910px" width="17" height="15"><path d="M1,0V14H17M3,5L7,11L11,6L15,9" fill="none" stroke="#b8b8b8" stroke-width="1.5"/></svg>
<div class="t c" style="left:211px;top:908px;font-size:15px;color:#bdbdbd"><span class="k">锚点</span></div>
<div class="t m" style="left:336px;top:912px;font-size:12px;color:#3a8ee6;letter-spacing:-0.2px">960.0,540.0</div>
<svg style="left:559px;top:906px" width="18" height="18"><path d="M9,9.5 m-1.8,0 a1.8,1.8 0 1 1 3.6,0 a3.6,3.6 0 1 1 -7.2,0 a5.4,5.4 0 1 1 10.8,0 a7.2,7.2 0 1 1 -14.4,0" fill="none" stroke="#b8b8b8" stroke-width="1.8"/></svg>
<svg style="left:164px;top:933px" width="16" height="17"><circle cx="8" cy="10" r="6" fill="none" stroke="#c0c0c0" stroke-width="1.7"/><path d="M5,1.2H11M8,1V4M8,10L10.5,7" stroke="#c0c0c0" stroke-width="1.6" fill="none"/></svg>
<div class="t c" style="left:187px;top:933px;font-size:15px;color:#bdbdbd"><span class="k">位置</span></div>
<div class="t m" style="left:336px;top:937px;font-size:12px;color:#3a8ee6;letter-spacing:-0.2px">960.0,540.0</div>
<svg style="left:559px;top:931px" width="18" height="18"><path d="M9,9.5 m-1.8,0 a1.8,1.8 0 1 1 3.6,0 a3.6,3.6 0 1 1 -7.2,0 a5.4,5.4 0 1 1 10.8,0 a7.2,7.2 0 1 1 -14.4,0" fill="none" stroke="#b8b8b8" stroke-width="1.8"/></svg>
<div class="a" style="left:1px;top:954px;width:1652px;height:1px;background:#111"></div>
<svg style="left:10px;top:958px" width="16" height="16"><rect x="1" y="1" width="9" height="9" fill="none" stroke="#c0c0c0" stroke-width="1.4"/><rect x="4" y="4" width="9" height="9" fill="#333" stroke="#c0c0c0" stroke-width="1.4"/><rect x="7" y="7" width="8" height="8" fill="#111" stroke="#c0c0c0" stroke-width="1.4"/><circle cx="11" cy="11" r="1.5" fill="#ddd"/></svg>
<div class="a" style="left:32px;top:956px;width:21px;height:19px;background:#1c1c1c"></div><svg style="left:35px;top:958px" width="17" height="16"><circle cx="7" cy="6.5" r="5.5" fill="none" stroke="#2d8ceb" stroke-width="1.6"/><rect x="7" y="7" width="8" height="8" fill="none" stroke="#2d8ceb" stroke-width="1.6"/></svg>
<svg style="left:58px;top:958px" width="16" height="16"><path d="M4,1H12V5L15,8L12,11V15H4V11L1,8L4,5Z" fill="#999" stroke="#ddd" stroke-width="1.2"/></svg>
<svg style="left:82px;top:958px" width="17" height="15"><ellipse cx="7" cy="8" rx="6" ry="5" fill="#c0c0c0"/><path d="M12,8 L16,3 M13,10 L16,7" stroke="#c0c0c0" stroke-width="1.5"/><rect x="1" y="11" width="14" height="3" fill="#c0c0c0"/></svg>
<div class="t c" style="left:133px;top:957px;font-size:15px;color:#bdbdbd"><span class="k">帧渲染时间</span></div>
<div class="t c" style="left:226px;top:957px;font-size:15px;color:#4ec38a">3<span class="k">毫秒</span></div>
<div class="a" style="left:333px;top:957px;width:204px;height:17px;border:1px solid #2e2e2e;background:#1f1f1f"></div><div class="t c" style="left:385px;top:957px;font-size:15px;color:#a0a0a0"><span class="k">切换开关</span>/<span class="k">模式</span></div>

<!-- TRACK AREA -->
<div class="a" style="left:703px;top:593px;width:2px;height:361px;background:#161616"></div>
<!-- work area bar -->
<div class="a" style="left:711px;top:636px;width:914px;height:10px;background:#3b3832;border-radius:0 5px 5px 0"></div>
<div class="a" style="left:711px;top:636px;width:175px;height:10px;background:#6a6a6a"></div>
<div class="a" style="left:705px;top:636px;width:8px;height:10px;background:#2d8ceb;border-radius:5px 0 0 5px"></div>
<div class="a" style="left:732px;top:636px;width:2px;height:10px;background:#4b8fd6"></div>
<div class="a" style="left:884px;top:636px;width:8px;height:10px;background:#2d8ceb;border-radius:0 5px 5px 0"></div>
<!-- ruler -->
<div class="t m" style="left:708px;top:651px;font-size:13px;color:#c8c8c8;letter-spacing:-1px">:00f</div>
<div class="t m" style="left:815px;top:651px;font-size:13px;color:#c8c8c8;letter-spacing:-1px">00:30f</div>
<div class="t m" style="left:935px;top:651px;font-size:13px;color:#c8c8c8;letter-spacing:-1px">01:00f</div>
<div class="t m" style="left:1057px;top:651px;font-size:13px;color:#c8c8c8;letter-spacing:-1px">01:30f</div>
<div class="t m" style="left:1178px;top:651px;font-size:13px;color:#c8c8c8;letter-spacing:-1px">02:00f</div>
<div class="t m" style="left:1300px;top:651px;font-size:13px;color:#c8c8c8;letter-spacing:-1px">02:30f</div>
<div class="t m" style="left:1423px;top:651px;font-size:13px;color:#c8c8c8;letter-spacing:-1px">03:00f</div>
<div class="t m" style="left:1545px;top:651px;font-size:13px;color:#c8c8c8;letter-spacing:-1px">03:30f</div>
<div class="a" style="left:714px;top:662px;width:1px;height:9px;background:#999"></div>
<div class="a" style="left:836px;top:665px;width:1px;height:6px;background:#999"></div>
<div class="a" style="left:958px;top:662px;width:1px;height:9px;background:#999"></div>
<div class="a" style="left:1080px;top:665px;width:1px;height:6px;background:#999"></div>
<div class="a" style="left:1201px;top:662px;width:1px;height:9px;background:#999"></div>
<div class="a" style="left:1323px;top:665px;width:1px;height:6px;background:#999"></div>
<div class="a" style="left:1446px;top:662px;width:1px;height:9px;background:#999"></div>
<div class="a" style="left:1568px;top:665px;width:1px;height:6px;background:#999"></div>
<div class="a" style="left:705px;top:671px;width:928px;height:1px;background:#111"></div>
<!-- comp bar -->
<div class="a" style="left:712px;top:672px;width:921px;height:19px;background:#686868"></div>
<div class="a" style="left:706px;top:673px;width:7px;height:18px;background:#2d8ceb;border-radius:4px 0 0 4px"></div>
<div class="a" style="left:712px;top:691px;width:921px;height:6px;background:#21b52a;border-top:1px solid #111;border-bottom:1px solid #111"></div>
<div class="a" style="left:705px;top:697px;width:928px;height:7px;background:#3e3b3b"></div>
<div class="a" style="left:713px;top:697px;width:97px;height:5px;background:#5d6698"></div>
<div class="a" style="left:705px;top:704px;width:928px;height:1px;background:#2a2a2a"></div>
<!-- layer 2 track -->
<div class="a" style="left:705px;top:705px;width:928px;height:23px;background:#505050"></div><div class="a" style="left:705px;top:705px;width:8px;height:23px;background:#484848"></div>
<div class="a" style="left:811px;top:707px;width:395px;height:19px;background:#5a6ed6;border-top:1px solid #c8cff5;border-left:1px solid #c8cff5"></div>
<div class="a" style="left:705px;top:728px;width:928px;height:2px;background:#212121"></div><div class="a" style="left:705px;top:730px;width:928px;height:23px;background:#353535"></div><div class="a" style="left:705px;top:730px;width:8px;height:23px;background:#2c2c2c"></div>
<svg style="left:810px;top:733px" width="11" height="17"><path d="M1,1H10M1,16H10" stroke="#c4c8d0" stroke-width="1.8"/><path d="M5.5,1V16" stroke="#b8bcc4" stroke-width="3.2"/></svg>
<div class="a" style="left:705px;top:753px;width:928px;height:2px;background:#212121"></div><div class="a" style="left:705px;top:755px;width:928px;height:23px;background:#353535"></div><div class="a" style="left:705px;top:755px;width:8px;height:23px;background:#2c2c2c"></div>
<svg style="left:810px;top:758px" width="11" height="17"><path d="M1,1H10M1,16H10" stroke="#c4c8d0" stroke-width="1.8"/><path d="M5.5,1V16" stroke="#b8bcc4" stroke-width="3.2"/></svg>
<div class="a" style="left:705px;top:778px;width:928px;height:2px;background:#212121"></div><div class="a" style="left:705px;top:780px;width:928px;height:23px;background:#353535"></div><div class="a" style="left:705px;top:780px;width:8px;height:23px;background:#2c2c2c"></div>
<svg style="left:810px;top:783px" width="11" height="17"><path d="M1,1H10M1,16H10" stroke="#c4c8d0" stroke-width="1.8"/><path d="M5.5,1V16" stroke="#b8bcc4" stroke-width="3.2"/></svg>
<div class="a" style="left:705px;top:803px;width:928px;height:2px;background:#212121"></div><div class="a" style="left:705px;top:805px;width:928px;height:23px;background:#353535"></div><div class="a" style="left:705px;top:805px;width:8px;height:23px;background:#2c2c2c"></div>
<svg style="left:810px;top:808px" width="11" height="17"><path d="M1,1H10M1,16H10" stroke="#c4c8d0" stroke-width="1.8"/><path d="M5.5,1V16" stroke="#b8bcc4" stroke-width="3.2"/></svg>
<div class="a" style="left:705px;top:828px;width:928px;height:2px;background:#212121"></div><div class="a" style="left:705px;top:830px;width:928px;height:23px;background:#353535"></div><div class="a" style="left:705px;top:830px;width:8px;height:23px;background:#2c2c2c"></div>
<div class="a" style="left:705px;top:853px;width:928px;height:2px;background:#212121"></div><div class="a" style="left:705px;top:855px;width:928px;height:23px;background:#353535"></div><div class="a" style="left:705px;top:855px;width:8px;height:23px;background:#2c2c2c"></div>
<svg style="left:810px;top:858px" width="11" height="17"><path d="M1,1H10M1,16H10" stroke="#c4c8d0" stroke-width="1.8"/><path d="M5.5,1V16" stroke="#b8bcc4" stroke-width="3.2"/></svg>
<div class="a" style="left:705px;top:878px;width:928px;height:2px;background:#212121"></div><div class="a" style="left:705px;top:880px;width:928px;height:23px;background:#353535"></div><div class="a" style="left:705px;top:880px;width:8px;height:23px;background:#2c2c2c"></div>
<svg style="left:810px;top:883px" width="11" height="17"><path d="M1,1H10M1,16H10" stroke="#c4c8d0" stroke-width="1.8"/><path d="M5.5,1V16" stroke="#b8bcc4" stroke-width="3.2"/></svg>
<div class="a" style="left:705px;top:903px;width:928px;height:2px;background:#212121"></div><div class="a" style="left:705px;top:905px;width:928px;height:23px;background:#353535"></div><div class="a" style="left:705px;top:905px;width:8px;height:23px;background:#2c2c2c"></div>
<div class="a" style="left:705px;top:928px;width:928px;height:2px;background:#212121"></div><div class="a" style="left:705px;top:930px;width:928px;height:23px;background:#353535"></div><div class="a" style="left:705px;top:930px;width:8px;height:23px;background:#2c2c2c"></div>
<svg style="left:810px;top:933px" width="11" height="17"><path d="M1,1H10M1,16H10" stroke="#c4c8d0" stroke-width="1.8"/><path d="M5.5,1V16" stroke="#b8bcc4" stroke-width="3.2"/></svg>

<div class="a" style="left:815px;top:660px;width:1px;height:294px;background:#3a7fd0"></div>
<svg style="left:808px;top:652px" width="15" height="19"><path d="M1,1H14V10L7.5,18L1,10Z" fill="#2d8ceb"/><path d="M5,7H10" stroke="#0c2a4a" stroke-width="1"/></svg>
<!-- keyframes -->
<svg style="left:809px;top:834px" width="13" height="13"><path d="M6.5,0.5L12.5,6.5L6.5,12.5L0.5,6.5Z" fill="#c4c4c4"/><path d="M6.5,0.5L0.5,6.5L6.5,12.5Z" fill="#8e8e8e"/></svg>
<svg style="left:867px;top:835px" width="11" height="12"><path d="M5.5,0.5L10.5,6L5.5,11.5L0.5,6Z" fill="#bdbdbd"/><path d="M5.5,0.5L10.5,6L5.5,11.5Z" fill="#7a7a7a"/></svg>
<svg style="left:708px;top:909px" width="12" height="12"><path d="M6,0.5L11.5,6L6,11.5L0.5,6Z" fill="#c4c4c4"/><path d="M6,0.5L0.5,6L6,11.5Z" fill="#8e8e8e"/></svg>
<svg style="left:793px;top:909px" width="12" height="12"><path d="M6,0.5L11.5,6L6,11.5L0.5,6Z" fill="#bdbdbd"/><path d="M6,0.5L11.5,6L6,11.5Z" fill="#7a7a7a"/></svg>
<!-- right scroll column -->
<div class="a" style="left:1632px;top:594px;width:21px;height:360px;background:#232323"></div>
<svg style="left:1636px;top:674px" width="14" height="18"><path d="M0.5,0.5H13.5V11L7,17.5L0.5,11Z" fill="#bdbdbd"/></svg>
<div class="a" style="left:1633px;top:696px;width:20px;height:1px;background:#151515"></div>
<svg style="left:1634px;top:700px" width="18" height="16"><path d="M1,9L8,1" stroke="#bdbdbd" stroke-width="1.5"/><path d="M1,9H10" stroke="#bdbdbd" stroke-width="1.5"/><rect x="9" y="3" width="8" height="7" fill="#bdbdbd"/><circle cx="8" cy="12" r="3" fill="none" stroke="#bdbdbd" stroke-width="1.5"/></svg>
<div class="a" style="left:1634px;top:727px;width:17px;height:104px;background:#2f2f2f;border-radius:8px"></div>
<!-- bottom bar track -->
<svg style="left:710px;top:961px" width="13" height="7"><path d="M1,6L6.5,1L12,6Z" fill="#c0c0c0"/></svg>
<div class="a" style="left:743px;top:965px;width:43px;height:1px;background:#666"></div>
<div class="a" style="left:781px;top:960px;width:11px;height:11px;border:2px solid #c0c0c0;border-radius:50%;background:#232323"></div>
<svg style="left:812px;top:959px" width="21" height="11"><path d="M1,10L7,3L10,6L14,1L20,10Z" fill="#c8c8c8"/></svg>
<div class="a" style="left:840px;top:957px;width:146px;height:17px;background:#2e2e2e;border-radius:8px"></div>
<!-- paragraph -->
<div class="p" id="para" style="left:1660px;top:592px;width:255px;height:384px"></div>

<!-- INFO -->
<div class="t c" style="left:1674px;top:43px;font-size:17px;color:#d4d4d4;"><span class="k">信息</span></div>
<svg style="left:1724px;top:48px" width="11" height="10"><path d="M0,1H11M0,5H11M0,9H11" stroke="#bcbcbc" stroke-width="2"/></svg>
<div class="a" style="left:1674px;top:65px;width:60px;height:2px;background:#cfcfcf"></div>
<div class="t c" style="left:1762px;top:43px;font-size:17px;color:#8c8c8c;"><span class="k">音频</span></div>
<div class="t c" style="left:1847px;top:43px;font-size:17px;color:#8c8c8c;"><span class="k">预</span></div>
<div class="a" style="left:1869px;top:38px;width:1px;height:30px;background:#2a2a2a"></div>
<svg style="left:1900px;top:46px" width="13" height="11"><path d="M1.5,1.5L5.5,5.5L1.5,9.5M7.5,1.5L11.5,5.5L7.5,9.5" fill="none" stroke="#c8c8c8" stroke-width="2"/></svg>
<div class="a" style="left:1670px;top:91px;width:25px;height:25px;background:#000"></div><div class="a" style="left:1671px;top:92px;width:22px;height:22px;background:#4f5750"></div>
<div class="t " style="left:1702px;top:76px;font-size:13px;color:#a0a0a0;letter-spacing:0.2px">R :  79</div>
<div class="t " style="left:1702px;top:93px;font-size:13px;color:#a0a0a0;letter-spacing:0.2px">G :  87</div>
<div class="t " style="left:1702px;top:110px;font-size:13px;color:#a0a0a0;letter-spacing:0.2px">B :  80</div>
<div class="t " style="left:1702px;top:127px;font-size:13px;color:#a0a0a0;letter-spacing:0.2px">A :  255</div>
<div class="a" style="left:1787px;top:79px;width:1px;height:62px;background:#2c2c2c"></div>
<svg style="left:1799px;top:105px" width="13" height="13"><path d="M6.5,0V13M0,6.5H13" stroke="#c8c8c8" stroke-width="1.4"/></svg>
<div class="t " style="left:1815px;top:76px;font-size:13px;color:#a0a0a0;">X : 949</div>
<div class="t " style="left:1815px;top:93px;font-size:13px;color:#a0a0a0;">Y :  755</div>
<div class="a" style="left:1668px;top:148px;width:247px;height:1px;background:#2c2c2c"></div>
<div class="t c" style="left:1669px;top:155px;font-size:16px;color:#a8a8a8;letter-spacing:0"><span class="k">蒙版顶点</span></div>
<div class="t " style="left:1669px;top:173px;font-size:14px;color:#a8a8a8;letter-spacing:0px"><span class="k">位置</span>: 41.0, 18.0</div>
<!-- CHARACTER -->
<div class="t c" style="left:1713px;top:229px;font-size:17px;color:#8c8c8c;"><span class="k">对齐</span></div>
<div class="t c" style="left:1798px;top:229px;font-size:17px;color:#d4d4d4;"><span class="k">字符</span></div>
<svg style="left:1848px;top:234px" width="11" height="10"><path d="M0,1H11M0,5H11M0,9H11" stroke="#bcbcbc" stroke-width="2"/></svg>
<div class="a" style="left:1797px;top:250px;width:60px;height:2px;background:#cfcfcf"></div>
<div class="a" style="left:1870px;top:222px;width:1px;height:30px;background:#2a2a2a"></div>
<svg style="left:1900px;top:231px" width="13" height="11"><path d="M1.5,1.5L5.5,5.5L1.5,9.5M7.5,1.5L11.5,5.5L7.5,9.5" fill="none" stroke="#c8c8c8" stroke-width="2"/></svg>
<div class="a" style="left:1666px;top:266px;width:153px;height:22px;background:#181818;border:1px solid #262626;border-radius:2px"></div><div class="a" style="left:1796px;top:267px;width:1px;height:20px;background:#262626"></div>
<div class="t " style="left:1676px;top:270px;font-size:14px;color:#c8c8c8;">Taipei Sans TC B...</div>
<svg style="left:1803px;top:274px" width="11" height="7"><path d="M1,1L5.5,5.5L10,1" fill="none" stroke="#a8a8a8" stroke-width="1.3"/></svg>
<div class="a" style="left:1666px;top:296px;width:153px;height:22px;background:#181818;border:1px solid #262626;border-radius:2px"></div><div class="a" style="left:1796px;top:297px;width:1px;height:20px;background:#262626"></div>
<div class="t " style="left:1676px;top:300px;font-size:14px;color:#c8c8c8;">Regular</div>
<svg style="left:1803px;top:304px" width="11" height="7"><path d="M1,1L5.5,5.5L10,1" fill="none" stroke="#a8a8a8" stroke-width="1.3"/></svg>
<svg style="left:1827px;top:268px" width="22" height="22"><path d="M3,20 L2,18 L12,8 L14,10 L4,20Z" fill="none" stroke="#c8c8c8" stroke-width="1.5"/><path d="M11,7 L16,2 Q18,0 20,2 Q22,4 20,6 L15,11Z" fill="#c8c8c8"/></svg>
<div class="a" style="left:1825px;top:297px;width:25px;height:21px;border:1px solid #9a9a9a;background:linear-gradient(#000 50%,#fff 50%)"></div>
<div class="a" style="left:1873px;top:282px;width:37px;height:37px;background:#fff;border:1px solid #000"></div><div class="a" style="left:1884px;top:293px;width:15px;height:15px;background:#232323"></div><svg style="left:1873px;top:282px" width="37" height="37"><path d="M1,36L36,1" stroke="#b8141e" stroke-width="2.4"/></svg><div class="a" style="left:1856px;top:265px;width:36px;height:36px;background:#fff;border:1px solid #000"></div>
<div class="a" style="left:1857px;top:304px;width:15px;height:14px;background:#fff;border:1px solid #888"></div><svg style="left:1857px;top:304px" width="15" height="14"><path d="M1,13L14,1" stroke="#d0202a" stroke-width="1.3"/></svg>
<svg style="left:1895px;top:268px" width="15" height="14"><path d="M3,6 Q3,2 8,2 Q12,2 12,7 V12" fill="none" stroke="#c8c8c8" stroke-width="1.8"/><path d="M0,7 L3,3 L6,7Z M9,10 L12,13.5 L15,10Z" fill="#c8c8c8"/></svg>
<div class="a" style="left:1668px;top:326px;width:245px;height:1px;background:#2c2c2c"></div>
<svg style="left:1666px;top:333px" width="24" height="18"><path d="M1,8H9M5,8V17M3,17H7" stroke="#c8c8c8" stroke-width="2.2" fill="none"/><path d="M9,2H23M16,2V16M13,16H19" stroke="#c8c8c8" stroke-width="3" fill="none"/></svg>
<div class="t " style="left:1697px;top:335px;font-size:15px;color:#3a8ee6;">208</div>
<div class="t c" style="left:1725px;top:334px;font-size:16px;color:#a8a8a8;"><span class="k">像素</span></div>
<svg style="left:1766px;top:338px" width="9" height="8"><path d="M0,0H9L4.5,8Z" fill="#a8a8a8"/></svg>
<svg style="left:1797px;top:333px" width="22" height="22"><path d="M4,4V19M1,7L4,3L7,7M1,16L4,20L7,16" fill="none" stroke="#c8c8c8" stroke-width="1.5"/><path d="M10,10L14,1L18,10M10,20L14,11L18,20M9,10H20M9,20H20" fill="none" stroke="#c8c8c8" stroke-width="1.4"/></svg>
<div class="t c" style="left:1829px;top:334px;font-size:16px;color:#3a8ee6;"><span class="k">自动</span></div>
<svg style="left:1899px;top:338px" width="9" height="8"><path d="M0,0H9L4.5,8Z" fill="#a8a8a8"/></svg>
<svg style="left:1665px;top:359px" width="23" height="20"><path d="M1,1L5,13L9,1M7,14L13,0M12,13L16,1L20,13M13,9H19" fill="none" stroke="#c8c8c8" stroke-width="1.6"/><path d="M8,17H16M8,17L11,15M8,17L11,19" stroke="#c8c8c8" stroke-width="1.3" fill="none"/></svg>
<div class="t c" style="left:1698px;top:359px;font-size:16px;color:#6e6e6e;letter-spacing:0"><span class="k">度量标准</span></div>
<svg style="left:1766px;top:363px" width="9" height="8"><path d="M0,0H9L4.5,8Z" fill="#a8a8a8"/></svg>
<div class="a" style="left:1800px;top:358px;width:23px;height:13px;background:#c8c8c8"></div><div class="t " style="left:1801px;top:359px;font-size:13px;color:#232323;font-weight:bold">VA</div>
<svg style="left:1800px;top:372px" width="23" height="7"><path d="M1,3.5H22M1,3.5L4,1M1,3.5L4,6M22,3.5L19,1M22,3.5L19,6" stroke="#c8c8c8" stroke-width="1.3" fill="none"/></svg>
<div class="t " style="left:1827px;top:359px;font-size:15px;color:#3a8ee6;">200</div>
<svg style="left:1899px;top:363px" width="9" height="8"><path d="M0,0H9L4.5,8Z" fill="#a8a8a8"/></svg>
<div class="a" style="left:1668px;top:388px;width:245px;height:1px;background:#2c2c2c"></div>
<svg style="left:1668px;top:398px" width="19" height="16"><path d="M0,2H19M0,8H19M0,14H19" stroke="#c8c8c8" stroke-width="3"/></svg>
<div class="t c" style="left:1697px;top:398px;font-size:16px;color:#a8a8a8;letter-spacing:0">- <span class="k">像素</span></div>
<svg style="left:1766px;top:402px" width="9" height="8"><path d="M0,0H9L4.5,8Z" fill="#a8a8a8"/></svg>
<div class="a" style="left:1778px;top:397px;width:132px;height:22px;background:#1c1c1c;border:1px solid #262626;border-radius:3px"></div><svg style="left:1893px;top:405px" width="11" height="7"><path d="M1,1L5.5,5.5L10,1" fill="none" stroke="#a8a8a8" stroke-width="1.3"/></svg>
<div class="a" style="left:1668px;top:427px;width:245px;height:1px;background:#2c2c2c"></div>
<svg style="left:1668px;top:435px" width="24" height="21"><path d="M4,1V20M1,4L4,0.5L7,4M1,17L4,20.5L7,17" fill="none" stroke="#c8c8c8" stroke-width="1.5"/><path d="M9,2H23M16,2V19M13,19H19" stroke="#c8c8c8" stroke-width="3" fill="none"/></svg>
<div class="t " style="left:1697px;top:437px;font-size:15px;color:#3a8ee6;">100</div>
<div class="t " style="left:1725px;top:437px;font-size:14px;color:#a8a8a8;">%</div>
<svg style="left:1766px;top:441px" width="9" height="8"><path d="M0,0H9L4.5,8Z" fill="#a8a8a8"/></svg>
<svg style="left:1799px;top:436px" width="23" height="22"><path d="M3,2H20M11.5,2V15M8,15H15" stroke="#c8c8c8" stroke-width="3" fill="none"/><path d="M1,19H22M1,19L4,16.5M1,19L4,21.5M22,19L19,16.5M22,19L19,21.5" stroke="#c8c8c8" stroke-width="1.3" fill="none"/></svg>
<div class="t " style="left:1827px;top:437px;font-size:15px;color:#3a8ee6;">100</div>
<div class="t " style="left:1855px;top:437px;font-size:14px;color:#a8a8a8;">%</div>
<svg style="left:1899px;top:441px" width="9" height="8"><path d="M0,0H9L4.5,8Z" fill="#a8a8a8"/></svg>
<svg style="left:1666px;top:463px" width="22" height="22"><path d="M1,14L6,1L11,14M3,9H9M1,17H13" fill="none" stroke="#c8c8c8" stroke-width="1.5"/><path d="M17,21V13M14,16L17,12.5L20,16" fill="none" stroke="#c8c8c8" stroke-width="1.3"/><text x="13" y="8" font-size="8" fill="#c8c8c8" font-family="Liberation Sans">a</text></svg>
<div class="t " style="left:1697px;top:464px;font-size:15px;color:#3a8ee6;">0</div>
<div class="t c" style="left:1710px;top:463px;font-size:16px;color:#a8a8a8;"><span class="k">像素</span></div>
<svg style="left:1766px;top:468px" width="9" height="8"><path d="M0,0H9L4.5,8Z" fill="#a8a8a8"/></svg>
<svg style="left:1800px;top:463px" width="22" height="22"><path d="M3,1V15M19,1V15" stroke="#c8c8c8" stroke-width="1" stroke-dasharray="2,1.5"/><text x="6" y="13" font-size="11" fill="#c8c8c8" font-family="Liberation Sans">a</text><path d="M1,19H7M7,19L5,17M7,19L5,21M21,19H15M15,19L17,17M15,19L17,21" stroke="#c8c8c8" stroke-width="1.3" fill="none"/></svg>
<div class="t " style="left:1827px;top:463px;font-size:15px;color:#3a8ee6;">0</div>
<div class="t " style="left:1840px;top:464px;font-size:14px;color:#a8a8a8;">%</div>
<svg style="left:1899px;top:468px" width="9" height="8"><path d="M0,0H9L4.5,8Z" fill="#a8a8a8"/></svg>
<div class="a" style="left:1668px;top:493px;width:245px;height:1px;background:#2c2c2c"></div>
<div class="t " style="left:1698px;top:502px;font-size:19px;color:#c8c8c8;font-family:'Liberation Serif';font-weight:bold">T</div>
<div class="t " style="left:1730px;top:502px;font-size:19px;color:#c8c8c8;font-family:'Liberation Serif';font-style:italic">T</div>
<div class="t " style="left:1764px;top:502px;font-size:19px;color:#c8c8c8;font-family:'Liberation Serif';font-weight:bold;letter-spacing:-1px">TT</div>
<div class="t " style="left:1795px;top:502px;font-size:19px;color:#c8c8c8;font-family:'Liberation Serif';font-weight:bold">T<span style="font-size:14px">T</span></div>
<div class="t " style="left:1835px;top:502px;font-size:19px;color:#c8c8c8;font-family:'Liberation Serif';font-weight:bold">T<sup style="font-size:9px">1</sup></div>
<div class="t " style="left:1866px;top:502px;font-size:19px;color:#c8c8c8;font-family:'Liberation Serif';font-weight:bold">T<sub style="font-size:9px">1</sub></div>
<div class="a" style="left:1674px;top:537px;width:16px;height:16px;border:2px solid #8a8a8a;border-radius:2px"></div><div class="t c" style="left:1696px;top:537px;font-size:16px;color:#a8a8a8;"><span class="k">连字</span></div>
<div class="a" style="left:1797px;top:537px;width:16px;height:16px;border:2px solid #8a8a8a;border-radius:2px"></div><div class="t c" style="left:1818px;top:537px;font-size:16px;color:#a8a8a8;letter-spacing:0"><span class="k">印地语数字</span></div>
<!-- PARAGRAPH -->
<div class="t c" style="left:1662px;top:602px;font-size:16px;color:#8c8c8c;letter-spacing:0"><span class="k">摇摆器</span></div>
<div class="t c" style="left:1758px;top:601px;font-size:17px;color:#d4d4d4;"><span class="k">段落</span></div>
<svg style="left:1807px;top:605px" width="11" height="10"><path d="M0,1H11M0,5H11M0,9H11" stroke="#bcbcbc" stroke-width="2"/></svg>
<div class="a" style="left:1756px;top:623px;width:60px;height:2px;background:#cfcfcf"></div>
<div class="t c" style="left:1843px;top:601px;font-size:17px;color:#8c8c8c;"><span class="k">动态</span></div>
<div class="a" style="left:1870px;top:595px;width:1px;height:30px;background:#2a2a2a"></div>
<svg style="left:1900px;top:604px" width="13" height="11"><path d="M1.5,1.5L5.5,5.5L1.5,9.5M7.5,1.5L11.5,5.5L7.5,9.5" fill="none" stroke="#c8c8c8" stroke-width="2"/></svg>
<svg style="left:1672px;top:639px" width="20" height="18"><rect x="0" y="0.5" width="19" height="1.7" fill="#c0c0c0"/><rect x="0" y="4.1" width="13" height="1.7" fill="#c0c0c0"/><rect x="0" y="7.7" width="19" height="1.7" fill="#c0c0c0"/><rect x="0" y="11.3" width="13" height="1.7" fill="#c0c0c0"/><rect x="0" y="14.9" width="19" height="1.7" fill="#c0c0c0"/></svg>
<svg style="left:1703px;top:639px" width="20" height="18"><rect x="0.0" y="0.5" width="19" height="1.7" fill="#c0c0c0"/><rect x="3.0" y="4.1" width="13" height="1.7" fill="#c0c0c0"/><rect x="0.0" y="7.7" width="19" height="1.7" fill="#c0c0c0"/><rect x="3.0" y="11.3" width="13" height="1.7" fill="#c0c0c0"/><rect x="0.0" y="14.9" width="19" height="1.7" fill="#c0c0c0"/></svg>
<svg style="left:1734px;top:639px" width="20" height="18"><rect x="0" y="0.5" width="19" height="1.7" fill="#c0c0c0"/><rect x="6" y="4.1" width="13" height="1.7" fill="#c0c0c0"/><rect x="0" y="7.7" width="19" height="1.7" fill="#c0c0c0"/><rect x="6" y="11.3" width="13" height="1.7" fill="#c0c0c0"/><rect x="0" y="14.9" width="19" height="1.7" fill="#c0c0c0"/></svg>
<svg style="left:1772px;top:639px" width="20" height="18"><rect x="0" y="0.5" width="19" height="1.7" fill="#c0c0c0"/><rect x="0" y="4.1" width="19" height="1.7" fill="#c0c0c0"/><rect x="0" y="7.7" width="19" height="1.7" fill="#c0c0c0"/><rect x="0" y="11.3" width="19" height="1.7" fill="#c0c0c0"/><rect x="0" y="14.9" width="13" height="1.7" fill="#c0c0c0"/></svg>
<div class="a" style="left:1800px;top:635px;width:26px;height:25px;background:#1a1a1a;border-radius:2px"></div><svg style="left:1803px;top:639px" width="20" height="18"><rect x="0.0" y="0.5" width="19" height="1.7" fill="#2d8ceb"/><rect x="0.0" y="4.1" width="19" height="1.7" fill="#2d8ceb"/><rect x="0.0" y="7.7" width="19" height="1.7" fill="#2d8ceb"/><rect x="0.0" y="11.3" width="19" height="1.7" fill="#2d8ceb"/><rect x="3.0" y="14.9" width="13" height="1.7" fill="#2d8ceb"/></svg>
<svg style="left:1835px;top:639px" width="20" height="18"><rect x="0" y="0.5" width="19" height="1.7" fill="#c0c0c0"/><rect x="0" y="4.1" width="19" height="1.7" fill="#c0c0c0"/><rect x="0" y="7.7" width="19" height="1.7" fill="#c0c0c0"/><rect x="0" y="11.3" width="19" height="1.7" fill="#c0c0c0"/><rect x="6" y="14.9" width="13" height="1.7" fill="#c0c0c0"/></svg>
<svg style="left:1872px;top:639px" width="20" height="18"><rect x="0" y="0.5" width="19" height="1.7" fill="#c0c0c0"/><rect x="0" y="4.1" width="19" height="1.7" fill="#c0c0c0"/><rect x="0" y="7.7" width="19" height="1.7" fill="#c0c0c0"/><rect x="0" y="11.3" width="19" height="1.7" fill="#c0c0c0"/><rect x="0" y="14.9" width="19" height="1.7" fill="#c0c0c0"/></svg>
<div class="a" style="left:1668px;top:668px;width:228px;height:1px;background:#2c2c2c"></div>
<svg style="left:1668px;top:671px" width="22" height="22"><path d="M0,11H7" stroke="#c0c0c0" stroke-width="1.6"/><path d="M4.5,8.5L7.5,11L4.5,13.5Z" fill="#c0c0c0" stroke="#c0c0c0" stroke-width="1"/><path d="M9.5,1.5V20.5" stroke="#c0c0c0" stroke-width="1.6"/><path d="M12,3H19M12,7H21M12,11H21M12,15H21M12,19H19" stroke="#c0c0c0" stroke-width="1.5"/></svg>
<div class="t " style="left:1694px;top:671px;font-size:15px;color:#3a8ee6;">0</div>
<div class="t c" style="left:1707px;top:671px;font-size:16px;color:#a8a8a8;"><span class="k">像素</span></div>
<svg style="left:1757px;top:671px" width="22" height="22"><path d="M0,7H7" stroke="#c0c0c0" stroke-width="1.6"/><path d="M4.5,4.5L7.5,7L4.5,9.5Z" fill="#c0c0c0" stroke="#c0c0c0" stroke-width="1"/><rect x="10.5" y="3" width="10" height="6" fill="none" stroke="#c0c0c0" stroke-width="1.6"/><path d="M10,13H19M10,17H19M10,21H17" stroke="#c0c0c0" stroke-width="1.5"/></svg>
<div class="t " style="left:1786px;top:671px;font-size:15px;color:#3a8ee6;">0</div>
<div class="t c" style="left:1799px;top:671px;font-size:16px;color:#a8a8a8;"><span class="k">像素</span></div>
<svg style="left:1842px;top:671px" width="22" height="22"><path d="M0,2.5H6" stroke="#c0c0c0" stroke-width="1.6"/><path d="M3.5,0.0L6.5,2.5L3.5,5.0Z" fill="#c0c0c0" stroke="#c0c0c0" stroke-width="1"/><path d="M8,7H17M8,11H17M8,15H17M8,19H17" stroke="#c0c0c0" stroke-width="1.5"/></svg>
<div class="t " style="left:1867px;top:671px;font-size:15px;color:#3a8ee6;">0</div>
<div class="t c" style="left:1879px;top:671px;font-size:16px;color:#a8a8a8;"><span class="k">像素</span></div>
<svg style="left:1668px;top:696px" width="22" height="22"><path d="M1,3H8M1,7H8M1,11H8M1,15H8M1,19H8" stroke="#c0c0c0" stroke-width="1.5"/><path d="M11.5,1V21" stroke="#c0c0c0" stroke-width="1.6"/><path d="M21,11H15" stroke="#c0c0c0" stroke-width="1.6"/><path d="M17.5,8.5L14.5,11L17.5,13.5Z" fill="#c0c0c0" stroke="#c0c0c0" stroke-width="1"/></svg>
<div class="t " style="left:1694px;top:694px;font-size:15px;color:#3a8ee6;">0</div>
<div class="t c" style="left:1707px;top:693px;font-size:16px;color:#a8a8a8;"><span class="k">像素</span></div>
<svg style="left:1757px;top:696px" width="22" height="24"><path d="M10,3H19M10,7H19M10,11H19" stroke="#c0c0c0" stroke-width="1.5"/><path d="M0,17H7" stroke="#c0c0c0" stroke-width="1.6"/><path d="M4.5,14.5L7.5,17L4.5,19.5Z" fill="#c0c0c0" stroke="#c0c0c0" stroke-width="1"/><rect x="10.5" y="14.5" width="10" height="6" fill="none" stroke="#c0c0c0" stroke-width="1.6"/></svg>
<div class="t " style="left:1786px;top:696px;font-size:15px;color:#3a8ee6;">0</div>
<div class="t c" style="left:1799px;top:696px;font-size:16px;color:#a8a8a8;"><span class="k">像素</span></div>
<div class="a" style="left:1840px;top:696px;width:26px;height:25px;background:#1a1a1a;border-radius:2px"></div><svg style="left:1843px;top:700px" width="20" height="17"><path d="M0,3L5,8.5L0,14Z" fill="#2d8ceb"/><path d="M13,1V16M17,1V16" stroke="#2d8ceb" stroke-width="2"/><path d="M17,1H11A4.5,4.5 0 0 0 11,10H13" fill="#2d8ceb"/></svg>
<svg style="left:1872px;top:700px" width="20" height="17"><path d="M20,3L15,8.5L20,14Z" fill="#c0c0c0"/><path d="M5,1V16M9,1V16" stroke="#c0c0c0" stroke-width="2"/><path d="M9,1H4A4.5,4.5 0 0 0 4,10H5" fill="#c0c0c0"/></svg>
<!-- COMP SHAPE -->
<svg width="1915" height="976" style="left:0;top:0" viewBox="0 0 1915 976">
<path fill="#fff" fill-rule="evenodd" stroke="#6678dc" stroke-width="2.3" d="
M979,156 L904,200 Q861,225 861,275 L861,361 Q861,411 904,437 L979,480 Q1022,506 1066,480 L1141,437 Q1184,411 1184,361 L1184,275 Q1184,225 1141,200 L1066,156 Q1022,130 979,156 Z
M1022.5,197 A27.4,27.4 0 1 0 1022.5,251.8 A27.4,27.4 0 1 0 1022.5,197 Z
M1008,273 Q1023,264 1038,273 L1064,288 Q1078,297 1080,314 L1064,338 L1064,347 Q1070,360 1064,371 L1038,385 Q1023,393 1008,385 L982,371 Q968,361 966,344 L966,314 Q968,297 982,288 Z
M986,391 L1010,405 L1010,431 Q1004,442 998,442 Q991,442 986,431 Z
M1059,391 L1035,405 L1035,431 Q1041,442 1047,442 Q1054,442 1059,431 Z"/>
<g fill="#6b7de0">
<circle cx="979" cy="156" r="3.9"/><circle cx="1066" cy="156" r="3.9"/>
<circle cx="904" cy="200" r="3.9"/><circle cx="1141" cy="200" r="3.9"/>
<circle cx="861" cy="275" r="3.9"/><circle cx="1184" cy="275" r="3.9"/>
<circle cx="861" cy="361" r="3.9"/><circle cx="1184" cy="361" r="3.9"/>
<circle cx="904" cy="437" r="3.9"/><circle cx="1141" cy="437" r="3.9"/>
<circle cx="979" cy="480" r="3.9"/><circle cx="1066" cy="480" r="3.9"/>
<circle cx="1022.5" cy="197" r="3.9"/><circle cx="995" cy="224.4" r="3.9"/><circle cx="1050" cy="224.4" r="3.9"/><circle cx="1022.5" cy="251.8" r="3.9"/>
<circle cx="1064" cy="347.5" r="3.9"/><circle cx="1073" cy="364.5" r="3.9"/>
<rect x="1058.5" y="331.5" width="11" height="11"/>
<circle cx="986" cy="391" r="3.9"/><circle cx="1010" cy="405" r="3.9"/><circle cx="986" cy="431" r="3.9"/><circle cx="1010" cy="431" r="3.9"/><circle cx="995" cy="439" r="3.9"/><circle cx="1001" cy="439" r="3.9"/>
<circle cx="1059" cy="391" r="3.9"/><circle cx="1035" cy="405" r="3.9"/><circle cx="1035" cy="431" r="3.9"/><circle cx="1059" cy="431" r="3.9"/><circle cx="1044" cy="439" r="3.9"/><circle cx="1050" cy="439" r="3.9"/>
</g>
<g fill="none" stroke="#6b7de0" stroke-width="1.3">
<circle cx="1141" cy="200" r="5.5"/><circle cx="1022.5" cy="197" r="5.5"/><circle cx="1010" cy="431" r="5.5"/><circle cx="1059" cy="431" r="5.5"/>
</g>
<g fill="none" stroke="#6b7de0" stroke-width="1.5">
<rect x="1003.5" y="268" width="9" height="9"/><rect x="1033.5" y="268" width="9" height="9"/>
<rect x="977.5" y="283" width="9" height="9"/><rect x="1059" y="283.5" width="9" height="9"/>
<rect x="962" y="309.5" width="9" height="9"/><rect x="1075" y="309.5" width="9" height="9"/>
<rect x="962" y="339.5" width="9" height="9"/>
<rect x="977.5" y="366.5" width="9" height="9"/><rect x="981" y="369.5" width="9" height="9"/><rect x="989.5" y="373.5" width="9" height="9"/>
<rect x="1003.5" y="381" width="9" height="9"/><rect x="1033" y="381" width="9" height="9"/>
<rect x="1053" y="367.5" width="9" height="9"/><rect x="1058.5" y="366" width="9" height="9"/>
</g>
</svg>
</body></html>
